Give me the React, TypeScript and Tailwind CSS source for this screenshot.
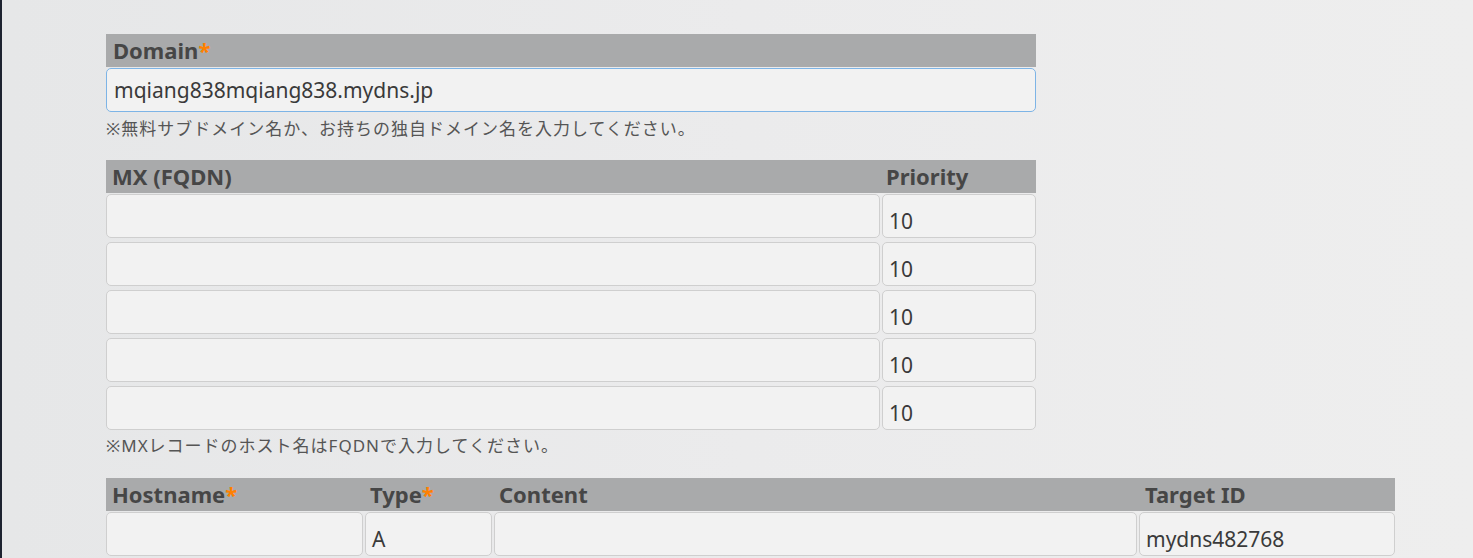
import React from 'react';

const font = { fontFamily: '"Noto Sans", "Noto Sans CJK JP", sans-serif' };

const Star = () => <span className="text-[#ff8000]">*</span>;

const Field = ({ value = '', width }: { value?: string; width: string }) => (
  <div
    className={`${width} h-[44px] shrink-0 rounded-[5px] border border-[#cfcfcf] bg-[#f2f2f2] px-[6px] pt-[12px] text-[21px] leading-[28px] text-[#3a3a3a]`}
  >
    {value}
  </div>
);

const Head = ({ children, width }: { children: React.ReactNode; width: string }) => (
  <div className={`${width} shrink-0 px-[6px] text-[22px] font-bold leading-[32px] text-[#464646]`}>{children}</div>
);

export default function App() {
  const mxRows = [0, 1, 2, 3, 4];
  return (
    <div
      className="h-[558px] w-[1473px] overflow-hidden border-l-2 border-[#1d2330] bg-gradient-to-r from-[#e6e7e8] via-[#ebebec] to-[#eeeeee]"
      style={font}
    >
      <div className="pl-[104px] pt-[34px]">
        {/* Domain */}
        <div className="w-[930px]">
          <div className="h-[33px] bg-[#a9aaab] px-[7px] text-[22px] font-bold leading-[32px] text-[#464646]">
            Domain
            <Star />
          </div>
          <div className="mt-[1px] h-[44px] rounded-[5px] border border-[#7db4e6] bg-[#f2f2f2] px-[7px] text-[21px] leading-[42px] text-[#3a3a3a]">
            mqiang838mqiang838.mydns.jp
          </div>
          <p className="mt-[5px] text-[17px] leading-[24px] tracking-[1px] text-[#555]">
            ※無料サブドメイン名か、お持ちの独自ドメイン名を入力してください。
          </p>
        </div>

        {/* MX */}
        <div className="mt-[19px] w-[930px]">
          <div className="flex h-[33px] gap-[2px] bg-[#a9aaab]">
            <Head width="w-[774px]">MX (FQDN)</Head>
            <Head width="w-[154px] !px-[4px]">Priority</Head>
          </div>
          <div className="mt-[1px] flex flex-col gap-[4px]">
            {mxRows.map((i) => (
              <div key={i} className="flex gap-[2px]">
                <Field width="w-[774px]" />
                <Field width="w-[154px]" value="10" />
              </div>
            ))}
          </div>
          <p className="mt-[4px] text-[17px] leading-[24px] tracking-[1px] text-[#555]">
            ※MXレコードのホスト名はFQDNで入力してください。
          </p>
        </div>

        {/* Hosts */}
        <div className="mt-[20px] w-[1289px]">
          <div className="flex h-[33px] gap-[2px] bg-[#a9aaab]">
            <Head width="w-[257px]">
              Hostname
              <Star />
            </Head>
            <Head width="w-[127px] !px-[5px]">
              Type
              <Star />
            </Head>
            <Head width="w-[643px] !px-[5px]">Content</Head>
            <Head width="w-[256px]">Target ID</Head>
          </div>
          <div className="mt-[1px] flex gap-[2px]">
            <Field width="w-[257px]" />
            <Field width="w-[127px]" value="A" />
            <Field width="w-[643px]" />
            <Field width="w-[256px]" value="mydns482768" />
          </div>
        </div>
      </div>
    </div>
  );
}
